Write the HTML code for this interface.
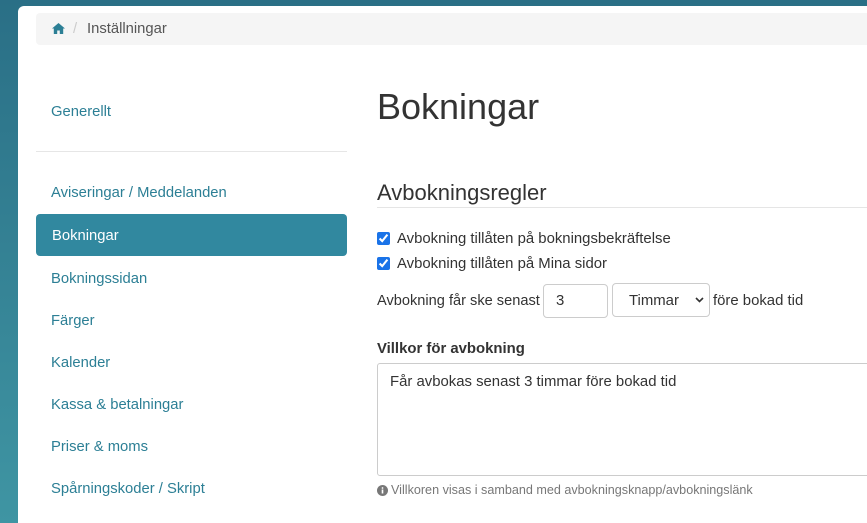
<!DOCTYPE html>
<html><head><meta charset="utf-8"><style>
html,body{margin:0;width:867px;height:523px;overflow:hidden}
body{position:relative;background:linear-gradient(180deg,#2a6f86,#3f95a3);font-family:"Liberation Sans",sans-serif;}
.panel{position:absolute;left:18px;top:6px;width:849px;height:517px;background:#fff;border-radius:6px 0 0 0;}
.bc{position:absolute;left:36px;top:13px;width:840px;height:32px;background:#f5f5f5;border-radius:4px;font-size:14.8px;color:#555;}
.bc span{position:absolute;top:8px}
.nav a{position:absolute;left:51px;font-size:14.8px;color:#2c7f95;text-decoration:none}
.act{position:absolute;left:36px;top:214px;width:311px;height:42px;background:#31889f;border-radius:4px}
.hr{position:absolute;left:36px;top:151px;width:311px;height:1px;background:#e6e6e6}
.t{position:absolute;color:#333}
input[type=checkbox]{position:absolute;margin:0;width:13px;height:13px;accent-color:#1a73e8}
.box{position:absolute;border:1px solid #ccc;border-radius:4px;box-sizing:border-box;background:#fff}
</style></head><body>
<div class="panel"></div>
<div class="bc">
<svg style="position:absolute;left:16px;top:10px" width="13" height="11" viewBox="0 0 13 11"><path d="M6.5 0L0 5.5h1.8V11h3.4V7.5h2.6V11h3.4V5.5H13z" fill="#2c7f95"/></svg>
<span style="left:37px;color:#ccc">/</span><span style="left:51px">Inställningar</span></div>
<div class="nav">
<a style="top:104px">Generellt</a>
<div class="hr"></div>
<a style="top:185px">Aviseringar / Meddelanden</a>
<div class="act"></div>
<a style="top:228px;left:52px;color:#fff">Bokningar</a>
<a style="top:271px">Bokningssidan</a>
<a style="top:313px">Färger</a>
<a style="top:355px">Kalender</a>
<a style="top:397px">Kassa &amp; betalningar</a>
<a style="top:439px">Priser &amp; moms</a>
<a style="top:481px">Spårningskoder / Skript</a>
</div>
<div class="t" style="left:377px;top:86px;font-size:36px;font-weight:300">Bokningar</div>
<div class="t" style="left:377px;top:180px;font-size:22px;font-weight:300">Avbokningsregler</div>
<div style="position:absolute;left:377px;top:207px;width:490px;height:1px;background:#e5e5e5"></div>
<input type="checkbox" checked style="left:377px;top:232px">
<div class="t" style="left:397px;top:231px;font-size:14.9px">Avbokning tillåten på bokningsbekräftelse</div>
<input type="checkbox" checked style="left:377px;top:257px">
<div class="t" style="left:397px;top:256px;font-size:14.9px">Avbokning tillåten på Mina sidor</div>
<div class="t" style="left:377px;top:293px;font-size:14.6px">Avbokning får ske senast</div>
<div class="box" style="left:543px;top:284px;width:65px;height:34px"><span class="t" style="left:12px;top:8px;font-size:14.9px">3</span></div>
<div class="box" style="left:612px;top:283px;width:98px;height:34px"><span class="t" style="left:16px;top:9px;font-size:14.9px">Timmar</span>
<svg style="position:absolute;left:82px;top:13px" width="9" height="6" viewBox="0 0 9 6"><path d="M1 1l3.5 3.5L8 1" stroke="#333" stroke-width="1.6" fill="none"/></svg></div>
<div class="t" style="left:713px;top:293px;font-size:14.9px">före bokad tid</div>
<div class="t" style="left:377px;top:341px;font-size:14.9px;font-weight:bold">Villkor för avbokning</div>
<div class="box" style="left:377px;top:363px;width:500px;height:113px;border-radius:3px"><span class="t" style="left:12px;top:10px;font-size:14.9px">Får avbokas senast 3 timmar före bokad tid</span></div>
<svg style="position:absolute;left:377px;top:485px" width="11" height="11" viewBox="0 0 11 11"><circle cx="5.5" cy="5.5" r="5.5" fill="#777"/><rect x="4.7" y="4.5" width="1.6" height="4" fill="#fff"/><circle cx="5.5" cy="3" r="0.9" fill="#fff"/></svg>
<div class="t" style="left:391px;top:483px;font-size:12.6px;color:#777">Villkoren visas i samband med avbokningsknapp/avbokningslänk</div>
</body></html>
